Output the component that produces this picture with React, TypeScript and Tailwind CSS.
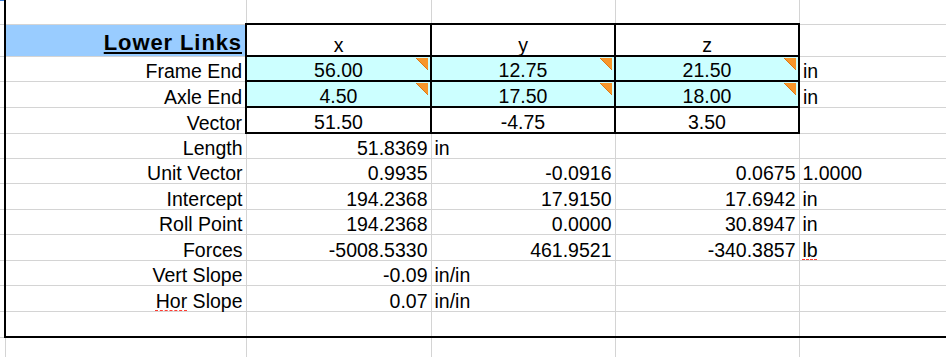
import React from "react";

type Align = "l" | "r" | "c";
type C = { t?: string; a?: Align; spell?: string; rest?: string };

const Tri = () => (
  <svg
    className="absolute right-[2px] top-[1px]"
    width="12"
    height="12"
    viewBox="0 0 12 12"
  >
    <polygon points="0,0 12,0 12,12" fill="#f7962a" />
    <polyline points="0,0 12,12" stroke="#e07712" strokeWidth="1" fill="none" />
  </svg>
);

const alignCls: Record<Align, string> = {
  l: "text-left",
  r: "text-right",
  c: "text-center",
};

function Txt({ c }: { c: C }) {
  if (c.spell) {
    return (
      <>
        <span className="underline decoration-dashed decoration-[#ff3b30] decoration-1 underline-offset-[2px]">
          {c.spell}
        </span>
        {c.rest}
      </>
    );
  }
  return <>{c.t}</>;
}

const base =
  "p-0 px-[3px] align-bottom whitespace-nowrap leading-[20px] border border-[#d4d4d4]";

export default function App() {
  const heights = [24, 32, 25, 26, 26, 25, 25, 26, 25, 26, 25, 26, 26, 25];

  const body: { a?: C; b?: C; c?: C; d?: C; e?: C }[] = [
    {},
    {},
    {},
    {},
    {},
    { a: { t: "Length" }, b: { t: "51.8369", a: "r" }, c: { t: "in", a: "l" } },
    {
      a: { t: "Unit Vector" },
      b: { t: "0.9935", a: "r" },
      c: { t: "-0.0916", a: "r" },
      d: { t: "0.0675", a: "r" },
      e: { t: "1.0000", a: "l" },
    },
    {
      a: { t: "Intercept" },
      b: { t: "194.2368", a: "r" },
      c: { t: "17.9150", a: "r" },
      d: { t: "17.6942", a: "r" },
      e: { t: "in", a: "l" },
    },
    {
      a: { t: "Roll Point" },
      b: { t: "194.2368", a: "r" },
      c: { t: "0.0000", a: "r" },
      d: { t: "30.8947", a: "r" },
      e: { t: "in", a: "l" },
    },
    {
      a: { t: "Forces" },
      b: { t: "-5008.5330", a: "r" },
      c: { t: "461.9521", a: "r" },
      d: { t: "-340.3857", a: "r" },
      e: { spell: "lb", rest: "", a: "l" },
    },
    { a: { t: "Vert Slope" }, b: { t: "-0.09", a: "r" }, c: { t: "in/in", a: "l" } },
    {
      a: { spell: "Hor", rest: " Slope" },
      b: { t: "0.07", a: "r" },
      c: { t: "in/in", a: "l" },
    },
    {},
    {},
  ];

  const tableRows: Record<number, { vals: string[]; cyan?: boolean; label: string; e?: string }> = {
    2: { label: "Frame End", vals: ["56.00", "12.75", "21.50"], cyan: true, e: "in" },
    3: { label: "Axle End", vals: ["4.50", "17.50", "18.00"], cyan: true, e: "in" },
    4: { label: "Vector", vals: ["51.50", "-4.75", "3.50"] },
  };

  return (
    <div
      className="relative w-[946px] h-[357px] overflow-hidden bg-white text-black text-[19.5px]"
      style={{ fontFamily: '"Liberation Sans", Arial, Helvetica, sans-serif' }}
    >
      <div className="absolute left-0 top-0 w-[4px] h-[1px] bg-[#3a7bd5]" />
      <table className="border-collapse table-fixed w-[1005px]">
        <colgroup>
          <col className="w-[5px]" />
          <col className="w-[241px]" />
          <col className="w-[185px]" />
          <col className="w-[184px]" />
          <col className="w-[184px]" />
          <col className="w-[206px]" />
        </colgroup>
        <tbody>
          {heights.map((h, i) => {
            const top = i === 0 ? " border-t-0" : "";
            const bottom = i === 12 ? " border-b-2 border-b-black" : "";
            const rowStyle = { height: h };
            const c0 = (
              <td
                className={`p-0 border-y border-[#d4d4d4] border-x-0${top}`}
              />
            );
            const aBase = `${base} border-l-2 border-l-black text-right pr-[4px]${top}${bottom}`;

            if (i === 1) {
              return (
                <tr key={i} style={rowStyle}>
                  {c0}
                  <td className={`${aBase} bg-[#99ccff] leading-[22px] pb-[2px]`}>
                    <span className="font-bold text-[22px] tracking-[0.9px] underline decoration-2 underline-offset-[2px]">
                      Lower Links
                    </span>
                  </td>
                  {["x", "y", "z"].map((v) => (
                    <td key={v} className={`${base} border-2 border-black text-center`}>
                      {v}
                    </td>
                  ))}
                  <td className={base} />
                </tr>
              );
            }
            if (tableRows[i]) {
              const r = tableRows[i];
              return (
                <tr key={i} style={rowStyle}>
                  {c0}
                  <td className={aBase}>{r.label}</td>
                  {r.vals.map((v, k) => (
                    <td
                      key={k}
                      className={`${base} relative border-2 border-black text-center${
                        r.cyan ? " bg-[#ccffff]" : ""
                      }`}
                    >
                      {v}
                      {r.cyan && <Tri />}
                    </td>
                  ))}
                  <td className={`${base} text-left`}>{r.e ?? ""}</td>
                </tr>
              );
            }
            const row = body[i];
            const cell = (c?: C) => (
              <td className={`${base} ${alignCls[c?.a ?? "r"]}${top}${bottom}`}>
                {c ? <Txt c={c} /> : null}
              </td>
            );
            return (
              <tr key={i} style={rowStyle}>
                {c0}
                <td className={i === 13 ? base : aBase}>{row.a ? <Txt c={row.a} /> : null}</td>
                {cell(row.b)}
                {cell(row.c)}
                {cell(row.d)}
                {cell(row.e)}
              </tr>
            );
          })}
        </tbody>
      </table>
    </div>
  );
}
